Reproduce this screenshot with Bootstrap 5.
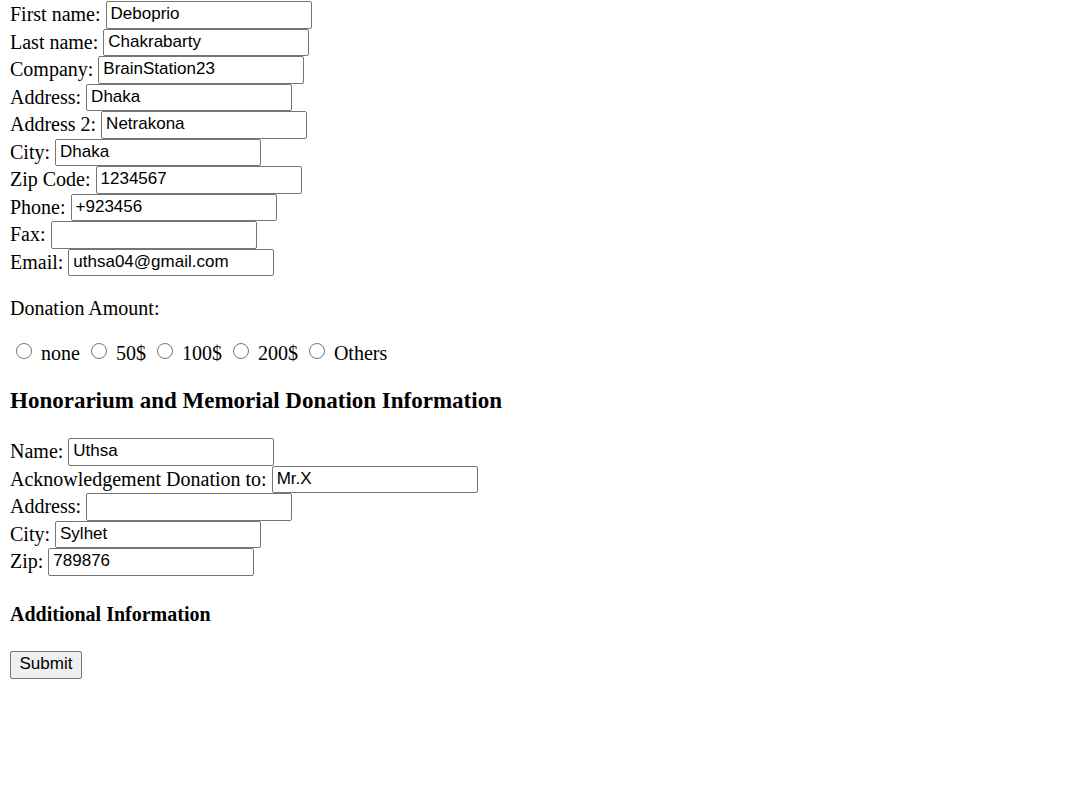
<!DOCTYPE html>
<html lang="en">
<head>
<meta charset="utf-8">
<meta name="viewport" content="width=device-width, initial-scale=1">
<title>Donation form</title>
<link href="https://cdn.jsdelivr.net/npm/bootstrap@5.3.0/dist/css/bootstrap.min.css" rel="stylesheet">
<style>
  body { font-family: "Liberation Serif", serif; font-size: 20px; line-height: 24px; color: #000; background: #fff; }
  .donation-form { padding: 1px 10px 24px; }
  .field-line { height: 28px; gap: 5px; }
  .field-line:nth-child(even) { height: 27px; }
  .field-line label { padding-bottom: 2px; }
  .field-line input { width: 206px; height: 100%; padding: 0 4px 2px; border: 1px solid #767676; border-radius: 2px; font-family: "Liberation Sans", sans-serif; font-size: 17px; line-height: 20px; color: #000; background: #fff; }
  .amount-title { margin: 20px 0 21px; }
  .amounts { padding-left: 6px; gap: 11px; }
  .amounts .form-check-input { width: 16px; height: 16px; margin: 0 9px 4px 0; border-color: #767676; }
  h3 { font-size: 23px; line-height: 28px; font-weight: 700; margin: 22px 0 23px; }
  h4 { font-size: 20px; line-height: 24px; font-weight: 700; margin: 26px 0 25px; }
  .submit-btn { width: 72px; height: 28px; padding: 0 0 2px; border: 1px solid #767676; border-radius: 2px; background: #efefef; color: #000; font-family: "Liberation Sans", sans-serif; font-size: 17px; line-height: 24px; }
</style>
</head>
<body>
<form class="donation-form">
  <div>
    <div class="field-line d-flex align-items-center"><label for="first">First name:</label><input id="first" type="text" value="Deboprio"></div>
    <div class="field-line d-flex align-items-center"><label for="last">Last name:</label><input id="last" type="text" value="Chakrabarty"></div>
    <div class="field-line d-flex align-items-center"><label for="company">Company:</label><input id="company" type="text" value="BrainStation23"></div>
    <div class="field-line d-flex align-items-center"><label for="address">Address:</label><input id="address" type="text" value="Dhaka"></div>
    <div class="field-line d-flex align-items-center"><label for="address2">Address 2:</label><input id="address2" type="text" value="Netrakona"></div>
    <div class="field-line d-flex align-items-center"><label for="city">City:</label><input id="city" type="text" value="Dhaka"></div>
    <div class="field-line d-flex align-items-center"><label for="zip">Zip Code:</label><input id="zip" type="text" value="1234567"></div>
    <div class="field-line d-flex align-items-center"><label for="phone">Phone:</label><input id="phone" type="text" value="+923456"></div>
    <div class="field-line d-flex align-items-center"><label for="fax">Fax:</label><input id="fax" type="text"></div>
    <div class="field-line d-flex align-items-center"><label for="email">Email:</label><input id="email" type="email" value="uthsa04@gmail.com"></div>
  </div>

  <p class="amount-title" id="amount-title">Donation Amount:</p>
  <div class="amounts d-flex flex-wrap" role="radiogroup" aria-labelledby="amount-title">
    <div class="d-flex align-items-center"><input class="form-check-input" type="radio" name="amount" id="a0"><label for="a0">none</label></div>
    <div class="d-flex align-items-center"><input class="form-check-input" type="radio" name="amount" id="a50"><label for="a50">50$</label></div>
    <div class="d-flex align-items-center"><input class="form-check-input" type="radio" name="amount" id="a100"><label for="a100">100$</label></div>
    <div class="d-flex align-items-center"><input class="form-check-input" type="radio" name="amount" id="a200"><label for="a200">200$</label></div>
    <div class="d-flex align-items-center"><input class="form-check-input" type="radio" name="amount" id="other"><label for="other">Others</label></div>
  </div>

  <h3>Honorarium and Memorial Donation Information</h3>
  <div>
    <div class="field-line d-flex align-items-center"><label for="hname">Name:</label><input id="hname" type="text" value="Uthsa"></div>
    <div class="field-line d-flex align-items-center"><label for="ack">Acknowledgement Donation to:</label><input id="ack" type="text" value="Mr.X"></div>
    <div class="field-line d-flex align-items-center"><label for="haddress">Address:</label><input id="haddress" type="text"></div>
    <div class="field-line d-flex align-items-center"><label for="hcity">City:</label><input id="hcity" type="text" value="Sylhet"></div>
    <div class="field-line d-flex align-items-center"><label for="hzip">Zip:</label><input id="hzip" type="text" value="789876"></div>
  </div>

  <h4>Additional Information</h4>
  <button class="submit-btn d-block" type="submit">Submit</button>
</form>
<script src="https://cdn.jsdelivr.net/npm/bootstrap@5.3.0/dist/js/bootstrap.bundle.min.js"></script>
</body>
</html>
